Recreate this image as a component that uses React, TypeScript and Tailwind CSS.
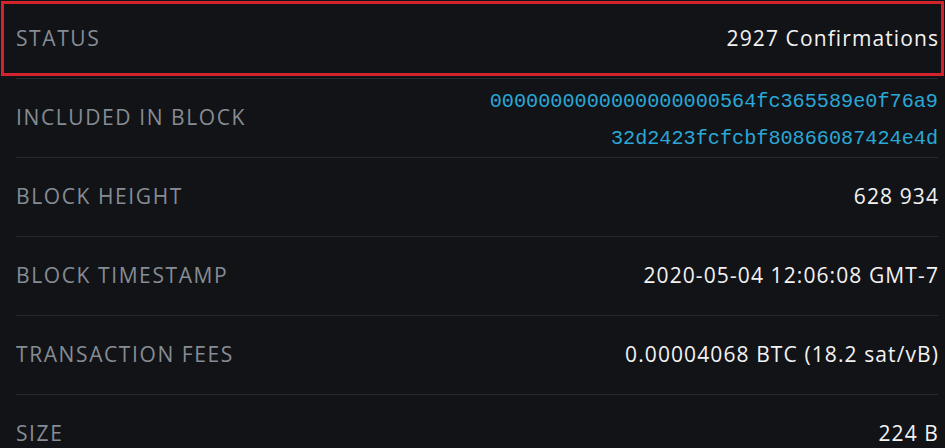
import React from "react";

const rows = [
  { label: "BLOCK HEIGHT", value: "628 934" },
  { label: "BLOCK TIMESTAMP", value: "2020-05-04 12:06:08 GMT-7" },
  { label: "TRANSACTION FEES", value: "0.00004068 BTC (18.2 sat/vB)" },
  { label: "SIZE", value: "224 B" },
];

const Row = ({ label, children }: { label: string; children: React.ReactNode }) => (
  <div className="flex h-[79px] items-center justify-between border-b border-[#26292f]">
    <span className="text-[21px] tracking-[1.6px] text-[#858c94]">{label}</span>
    {children}
  </div>
);

const App = () => {
  return (
    <div
      className="relative h-[448px] w-[945px] overflow-hidden bg-[#121317] pl-4 pr-[7px]"
      style={{ fontFamily: "'Open Sans', 'Liberation Sans', sans-serif" }}
    >
      <div className="relative">
        <Row label="STATUS">
          <span className="mr-[-1px] text-[21px] tracking-[1.1px] text-[#f2f2f2]">2927 Confirmations</span>
        </Row>
        <div className="pointer-events-none absolute left-[-15px] top-[1px] h-[75px] w-[943px] border-[3px] border-[#d3232c]" />
      </div>

      <Row label="INCLUDED IN BLOCK">
        <div
          className="pt-[3px] text-right text-[20.2px] leading-[37px] text-[#2aa7d6]"
          style={{ fontFamily: "'Liberation Mono', monospace" }}
        >
          <div>0000000000000000000564fc365589e0f76a9</div>
          <div>32d2423fcfcbf80866087424e4d</div>
        </div>
      </Row>

      {rows.map((r) => (
        <Row key={r.label} label={r.label}>
          <span className="mr-[-1px] text-[21px] tracking-[1.1px] text-[#f2f2f2]">{r.value}</span>
        </Row>
      ))}
    </div>
  );
};

export default App;
